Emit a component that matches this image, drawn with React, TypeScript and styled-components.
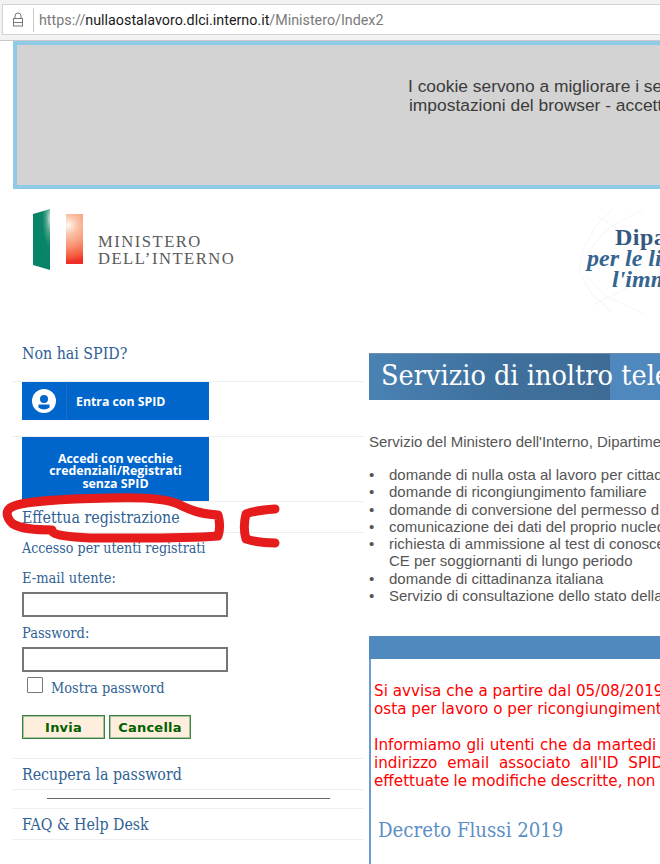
import React from "react";
import styled, { createGlobalStyle } from "styled-components";

const SERIF = `"DejaVu Serif Condensed", "DejaVu Serif", "Liberation Serif", serif`;
const ARIAL = `"Liberation Sans", Arial, sans-serif`;
const VERDANA = `"DejaVu Sans", Verdana, sans-serif`;
const SPID_FONT = `"Open Sans", "Noto Sans", sans-serif`;

const Global = createGlobalStyle`
  html, body { margin: 0; padding: 0; background: #fff; }
  body { width: 660px; height: 864px; overflow: hidden; }
  * { box-sizing: border-box; }
`;

const Page = styled.div`
  position: relative;
  width: 660px;
  height: 864px;
  overflow: hidden;
  background: #fff;
`;

const BrowserBar = styled.div`
  height: 41px;
  padding: 4px 0 5px 2px;
  background: #f2f2f2;
  border-bottom: 1px solid #c9c9c9;
`;
const AddressField = styled.div`
  height: 31px;
  display: flex;
  align-items: center;
  background: #fff;
  border: 1px solid #d4d4d4;
  border-right: 0;
`;
const LockCell = styled.div`
  width: 31px;
  height: 24px;
  display: flex;
  align-items: center;
  justify-content: center;
  border-right: 1px solid #c8c8c8;
`;
const Url = styled.div`
  padding-left: 5px;
  font: 14.3px Roboto, "Noto Sans", sans-serif;
  color: #7a7a7a;
  white-space: nowrap;
`;
const UrlHost = styled.span`
  color: #1a1a1a;
`;

const CookieBanner = styled.div`
  width: 1100px;
  height: 148px;
  margin-left: 13px;
  padding: 32px 0 0 391px;
  background: #d3d3d3;
  border: 4px solid #8fcbe6;
  border-right: 0;
  font: 17.4px/19px ${ARIAL};
  color: #3b3b3b;
`;
const CookieLine = styled.div<{ $indent?: number }>`
  padding-left: ${(p) => p.$indent ?? 0}px;
  white-space: nowrap;
`;

const Header = styled.div`
  height: 151px;
  display: flex;
  align-items: flex-start;
  padding: 20px 0 0 33px;
`;
const MinisterLogo = styled.div`
  display: flex;
  align-items: flex-start;
  width: 530px;
  flex: none;
`;
const MinisterName = styled.div`
  margin: 25px 0 0 15px;
  font: 16.6px/16.5px "Liberation Serif", serif;
  letter-spacing: 1.5px;
  color: #5a5a5a;
  white-space: nowrap;
`;
const Department = styled.div`
  position: relative;
  width: 120px;
  height: 100px;
  flex: none;
`;
const DeptLines = styled.div`
  position: relative;
  padding-top: 18px;
  width: 120px;
  color: #33597f;
  font-family: "Liberation Serif", serif;
  font-size: 24px;
  line-height: 21px;
  font-weight: 700;
  white-space: nowrap;
`;
const DeptTitle = styled.div`
  padding-left: 52px;
  color: #35597e;
  letter-spacing: 0.5px;
`;
const DeptItalic = styled.div<{ $pad: number }>`
  padding-left: ${(p) => p.$pad}px;
  font-style: italic;
  font-weight: 700;
  color: #35658f;
`;

const Columns = styled.div`
  display: flex;
  align-items: flex-start;
`;
const Sidebar = styled.div`
  width: 350px;
  margin-left: 13px;
  flex: none;
  font-family: ${SERIF};
  color: #2f5f94;
`;
const NavRow = styled.div<{ $h: number; $top?: number; $size?: number }>`
  height: ${(p) => p.$h}px;
  padding: ${(p) => p.$top ?? 0}px 0 0 9px;
  border-bottom: 1px solid #eeeeee;
  font-size: ${(p) => p.$size ?? 15.8}px;
  line-height: 20px;
`;
const SpidButton = styled.div`
  width: 187px;
  height: 38px;
  display: flex;
  align-items: center;
  background: #0066cc;
  color: #fff;
  font: 700 12.3px ${SPID_FONT};
`;
const SpidIconCell = styled.div`
  width: 45px;
  height: 38px;
  display: flex;
  align-items: center;
  justify-content: center;
  border-right: 1px solid #1a70c8;
`;
const SpidLabel = styled.span`
  margin-left: 9px;
`;
const LegacyButton = styled.div`
  width: 187px;
  height: 64px;
  padding-top: 16px;
  background: #0066cc;
  color: #fff;
  text-align: center;
  font: 700 12.4px/12.3px ${SPID_FONT};
`;
const LoginForm = styled.div`
  height: 226px;
  padding: 6px 0 0 9px;
  border-bottom: 1px solid #eeeeee;
`;
const LoginTitle = styled.div`
  font-size: 14.1px;
  line-height: 18px;
  margin-bottom: 12px;
`;
const FieldLabel = styled.div`
  font-size: 14.5px;
  line-height: 18px;
  height: 23px;
`;
const TextField = styled.input`
  display: block;
  width: 206px;
  height: 25px;
  margin-bottom: 7px;
  border: 2px solid #767676;
  background: #fff;
  padding: 0;
`;
const ShowPassword = styled.label`
  display: flex;
  align-items: center;
  margin: -2px 0 0 5px;
  height: 22px;
  font-size: 14.4px;
`;
const CheckBox = styled.input`
  width: 16px;
  height: 16px;
  margin: 0 8px 7px 0;
  appearance: none;
  border: 1px solid #767676;
  border-radius: 1px;
  background: #fff;
`;
const Actions = styled.div`
  display: flex;
  gap: 4px;
  margin-top: 16px;
`;
const ActionButton = styled.button<{ $w: number }>`
  width: ${(p) => p.$w}px;
  height: 24px;
  padding: 0;
  background: #ffeedd;
  border: 1px solid #3f7f3f;
  box-shadow: inset 0 0 0 1px #a5c5a0;
  color: #006000;
  font: 700 13px ${VERDANA};
  letter-spacing: 0.2px;
`;
const RuleRow = styled.div`
  height: 19px;
  padding: 8px 0 0 34px;
  border-bottom: 1px solid #eeeeee;
`;
const Rule = styled.div`
  width: 283px;
  border-top: 1px solid #666;
`;

const Main = styled.div`
  margin-left: 6px;
  padding-top: 13px;
  width: 900px;
  flex: none;
`;
const TitleBar = styled.div`
  height: 47px;
  padding-left: 12px;
  background: linear-gradient(90deg, #4a82b4 0, #3f719e 120px, #3e6c96 241px, #4f88bc 241px, #4f89bd 100%);
  border-top: 1px solid #6d8fae;
  font: 28.5px/44px ${SERIF};
  color: #fff;
  white-space: nowrap;
`;
const Intro = styled.div`
  margin-top: 33px;
  font: 15px/17px ${ARIAL};
  color: #555;
  white-space: nowrap;
`;
const BulletList = styled.ul`
  margin: 16px 0 0;
  padding: 0;
  list-style: none;
  font: 15px/17.25px ${ARIAL};
  color: #555;
`;
const BulletItem = styled.li`
  display: flex;
  white-space: nowrap;
`;
const Bullet = styled.span`
  width: 20px;
  flex: none;
`;
const Notice = styled.div`
  margin-top: 32px;
  min-height: 240px;
  border-left: 2px solid #6a9bd1;
`;
const NoticeHead = styled.div`
  height: 23px;
  margin-left: -2px;
  background: #4f89bd;
`;
const NoticeBody = styled.div`
  padding: 23px 0 0 3px;
  font: 15.2px/18px ${VERDANA};
  color: #ff0000;
`;
const NoticeLine = styled.div<{ $spacing?: number }>`
  white-space: nowrap;
  word-spacing: ${(p) => p.$spacing ?? 0}px;
`;
const NoticeGap = styled.div`
  height: 18px;
`;
const Decreto = styled.div`
  margin: 27px 0 0 7px;
  font: 20.2px/26px ${SERIF};
  color: #5b8fc4;
`;

const Scribble = styled.svg`
  position: absolute;
  left: 0;
  top: 490px;
  pointer-events: none;
`;

const Lock = () => (
  <svg width="12" height="15" viewBox="0 0 12 15" fill="none" stroke="#777" strokeWidth="1">
    <rect x="1.5" y="6.5" width="9" height="7.5" />
    <path d="M3 6.5V4a3 3 0 0 1 6 0v2.5" />
    <path d="M1.5 10.5h9" />
  </svg>
);

const MinisterMark = () => (
  <svg width="50" height="62" viewBox="0 0 50 62">
    <defs>
      <radialGradient id="green" cx="1" cy="0.16" r="0.75">
        <stop offset="0" stopColor="#c9e2da" />
        <stop offset="0.3" stopColor="#4aa48b" />
        <stop offset="0.6" stopColor="#0a8569" />
        <stop offset="1" stopColor="#078468" />
      </radialGradient>
      <radialGradient id="red" gradientUnits="userSpaceOnUse" cx="35" cy="16" r="44">
        <stop offset="0" stopColor="#fff8f2" />
        <stop offset="0.2" stopColor="#fbc5ac" />
        <stop offset="0.45" stopColor="#f99a7a" />
        <stop offset="0.72" stopColor="#f45a3c" />
        <stop offset="0.85" stopColor="#ee2c24" />
        <stop offset="1" stopColor="#ee2c24" />
      </radialGradient>
    </defs>
    <polygon points="0,5 17,0 17,61 0,56" fill="url(#green)" />
    <rect x="33" y="5" width="17" height="50" fill="url(#red)" />
  </svg>
);

const DeptStar = styled.svg`
  position: absolute;
  left: 0;
  top: 0;
`;

const SpidIcon = () => (
  <svg width="24" height="24" viewBox="0 0 24 24">
    <circle cx="12" cy="12" r="12" fill="#fff" />
    <circle cx="12" cy="10" r="4" fill="#0066cc" />
    <path d="M6.5 15.5h11v3.2a10 10 0 0 1-11 0z" fill="#0066cc" />
  </svg>
);

export default function App() {
  return (
    <Page>
      <Global />
      <BrowserBar>
        <AddressField>
          <LockCell>
            <Lock />
          </LockCell>
          <Url>
            https://<UrlHost>nullaostalavoro.dlci.interno.it</UrlHost>/Ministero/Index2
          </Url>
        </AddressField>
      </BrowserBar>

      <CookieBanner>
        <CookieLine>I cookie servono a migliorare i servizi</CookieLine>
        <CookieLine $indent={1}>impostazioni del browser - accetta</CookieLine>
      </CookieBanner>

      <Header>
        <MinisterLogo>
          <MinisterMark />
          <MinisterName>
            MINISTERO
            <br />
            DELL’INTERNO
          </MinisterName>
        </MinisterLogo>
        <Department>
          <DeptStar width="120" height="110" viewBox="0 0 120 110" fill="none" stroke="#f5f5f5">
            <path d="M50 0 L32 18 L20 40 L16 62 L28 84 L50 104 M80 0 L44 20 L24 44 M22 66 L44 88 L80 104 M36 8 L70 30 M30 96 L70 76" />
          </DeptStar>
          <DeptLines>
            <DeptTitle>Dipartimento</DeptTitle>
            <DeptItalic $pad={24}>per le libertà</DeptItalic>
            <DeptItalic $pad={49}>l'immigrazione</DeptItalic>
          </DeptLines>
        </Department>
      </Header>

      <Columns>
        <Sidebar>
          <NavRow $h={42} $top={4}>Non hai SPID?</NavRow>
          <NavRow $h={55}>
            <SpidButton>
              <SpidIconCell>
                <SpidIcon />
              </SpidIconCell>
              <SpidLabel>Entra con SPID</SpidLabel>
            </SpidButton>
          </NavRow>
          <NavRow $h={65}>
            <LegacyButton>
              Accedi con vecchie
              <br />
              credenziali/Registrati
              <br />
              senza SPID
            </LegacyButton>
          </NavRow>
          <NavRow $h={31} $top={6}>Effettua registrazione</NavRow>
          <LoginForm>
            <LoginTitle>Accesso per utenti registrati</LoginTitle>
            <FieldLabel>E-mail utente:</FieldLabel>
            <TextField type="text" />
            <FieldLabel>Password:</FieldLabel>
            <TextField type="password" />
            <ShowPassword>
              <CheckBox type="checkbox" />
              Mostra password
            </ShowPassword>
            <Actions>
              <ActionButton $w={83}>Invia</ActionButton>
              <ActionButton $w={82}>Cancella</ActionButton>
            </Actions>
          </LoginForm>
          <NavRow $h={31} $top={6}>Recupera la password</NavRow>
          <RuleRow>
            <Rule />
          </RuleRow>
          <NavRow $h={31} $top={6}>FAQ &amp; Help Desk</NavRow>
        </Sidebar>

        <Main>
          <TitleBar>Servizio di inoltro telematico</TitleBar>
          <Intro>Servizio del Ministero dell'Interno, Dipartimento</Intro>
          <BulletList>
            <BulletItem><Bullet>•</Bullet>domande di nulla osta al lavoro per cittadini</BulletItem>
            <BulletItem><Bullet>•</Bullet>domande di ricongiungimento familiare</BulletItem>
            <BulletItem><Bullet>•</Bullet>domande di conversione del permesso di</BulletItem>
            <BulletItem><Bullet>•</Bullet>comunicazione dei dati del proprio nucleo</BulletItem>
            <BulletItem>
              <Bullet>•</Bullet>
              <span>
                richiesta di ammissione al test di conoscenza
                <br />
                CE per soggiornanti di lungo periodo
              </span>
            </BulletItem>
            <BulletItem><Bullet>•</Bullet>domande di cittadinanza italiana</BulletItem>
            <BulletItem><Bullet>•</Bullet>Servizio di consultazione dello stato della</BulletItem>
          </BulletList>
          <Notice>
            <NoticeHead />
            <NoticeBody>
              <NoticeLine>Si avvisa che a partire dal 05/08/2019</NoticeLine>
              <NoticeLine>osta per lavoro o per ricongiungimento</NoticeLine>
              <NoticeGap />
              <NoticeLine $spacing={0.5}>Informiamo gli utenti che da martedi</NoticeLine>
              <NoticeLine $spacing={5}>indirizzo email associato all'ID SPID</NoticeLine>
              <NoticeLine $spacing={-0.5}>effettuate le modifiche descritte, non</NoticeLine>
            </NoticeBody>
            <Decreto>Decreto Flussi 2019</Decreto>
          </Notice>
        </Main>
      </Columns>

      <Scribble width="290" height="60" viewBox="0 490 290 60" fill="none" stroke="#e61c1c" strokeWidth="9" strokeLinecap="round" strokeLinejoin="round">
        <path d="M52 530 C34 530 22 529 13 524 C7 519 5 512 10 508 C20 501 60 499 110 498 C140 497 165 498 178 504 C190 510 200 514 218 515 C220 522 220 530 218 536 C180 539 130 538 90 538 C70 537 52 535 52 531" />
        <path d="M275 509 C262 510 252 511 246 514 C244 522 244 532 246 539 C255 542 266 543 275 543" />
      </Scribble>
    </Page>
  );
}
